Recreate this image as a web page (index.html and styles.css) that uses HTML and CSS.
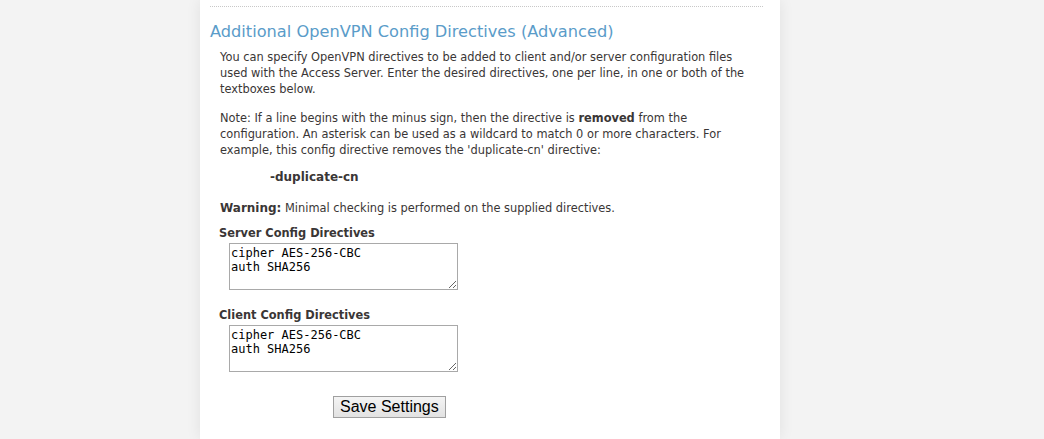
FILE: index.html
```html
<!DOCTYPE html>
<html>
<head>
  <title>Advanced VPN Settings</title>
  <link rel="stylesheet" href="styles.css">
</head>
<body>
<div class="page">
  <div class="rule"></div>
  <h2>Additional OpenVPN Config Directives (Advanced)</h2>
  <div class="section">
    <p>You can specify OpenVPN directives to be added to client and/or server configuration files
    used with the Access Server. Enter the desired directives, one per line, in one or both of the
    textboxes below.</p>
    <p>Note: If a line begins with the minus sign, then the directive is <b>removed</b> from the
    configuration. An asterisk can be used as a wildcard to match 0 or more characters. For
    example, this config directive removes the 'duplicate-cn' directive:</p>
    <p class="sample">-duplicate-cn</p>
    <p><b class="warn">Warning:</b> Minimal checking is performed on the supplied directives.</p>
  </div>
  <form class="directives">
    <label class="field-label">Server Config Directives</label>
    <textarea class="config" rows="3">cipher AES-256-CBC
auth SHA256</textarea>
    <label class="field-label">Client Config Directives</label>
    <textarea class="config" rows="3">cipher AES-256-CBC
auth SHA256</textarea>
    <div class="actions">
      <button type="button" class="save">Save Settings</button>
    </div>
  </form>
</div>
</body>
</html>
```

FILE: styles.css
```css
html, body {
    margin: 0;
    height: 100%;
}

body {
    background-color: #f3f3f3;
    font-family: "DejaVu Sans", Verdana, sans-serif;
    font-size: 11.4px;
    line-height: 16px;
    color: #3a3636;
}

.page {
    width: 580px;
    min-height: 100%;
    box-sizing: border-box;
    margin-left: 200px;
    padding: 6px 17px 0 10px;
    background-color: #fff;
    box-shadow: 0 0 14px rgba(0, 0, 0, 0.08);
}

.rule {
    border-top: 1px dotted #c8c8c8;
}

h2 {
    margin: 14px 0 6px 0;
    font-size: 16.2px;
    line-height: 22px;
    font-weight: normal;
    color: #5a9cc9;
}

.section {
    padding-left: 10px;
}

.section p {
    margin: 0 0 13px 0;
}

.section .sample {
    margin: -2px 0 15px 0;
    padding-left: 50px;
    font-size: 12px;
    font-weight: bold;
}

.warn {
    font-size: 12px;
}

.directives {
    display: flex;
    flex-direction: column;
    align-items: flex-start;
    padding-left: 9px;
    margin-top: -4px;
}

.field-label {
    font-weight: bold;
    margin-bottom: 2px;
}

.config {
    width: 229px;
    height: 47px;
    box-sizing: border-box;
    margin: 0 0 17px 10px;
    padding: 2px 1px 1px 1px;
    border: 1px solid #a9a9a9;
    font-family: "DejaVu Sans Mono", monospace;
    font-size: 12px;
    line-height: 14px;
    color: #000;
    resize: both;
}

.actions {
    align-self: stretch;
    padding-left: 114px;
    margin-top: 7px;
}

.save {
    font-family: "Liberation Sans", Arial, sans-serif;
    font-size: 16px;
    height: 22px;
    padding: 0 6px;
    border: 1px solid #a0a0a0;
    background: linear-gradient(#f4f4f4, #e2e2e2);
    color: #000;
}
```
